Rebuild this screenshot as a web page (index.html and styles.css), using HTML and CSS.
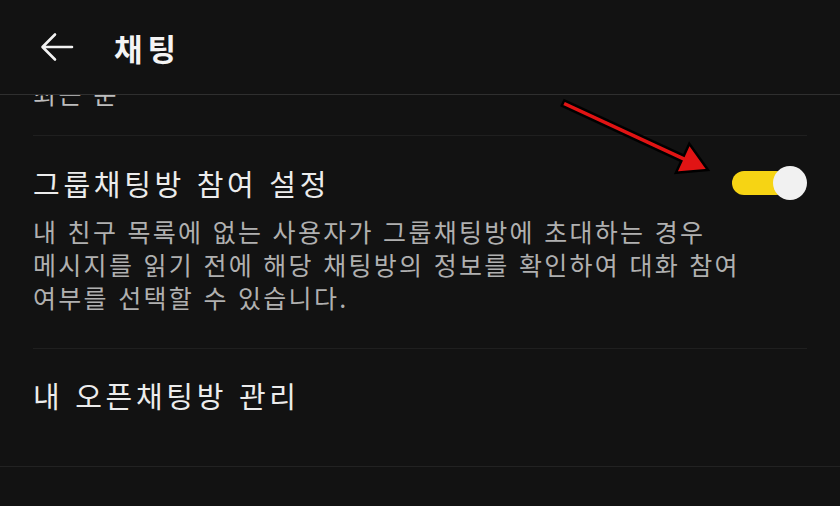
FILE: index.html
```html
<!DOCTYPE html>
<html lang="ko">
<head>
    <meta charset="UTF-8">
    <meta name="viewport" content="width=device-width, initial-scale=1.0">
    <title>채팅</title>
    <link rel="stylesheet" href="styles.css">
</head>
<body>
    <div class="screen">
        <header class="app-bar">
            <svg class="back-icon" width="34" height="30" viewBox="0 0 34 30">
                <path d="M32 15 H3 M15 2.5 L2.5 15 L15 27.5" fill="none" stroke="#f2f2f2" stroke-width="2.6" stroke-linecap="round" stroke-linejoin="round"/>
            </svg>
            <h1 class="app-title">채팅</h1>
        </header>

        <div class="list">
            <div class="row recent">
                <span class="recent-text">최근 순</span>
            </div>

            <div class="row setting">
                <div class="setting-head">
                    <span class="setting-title">그룹채팅방 참여 설정</span>
                    <div class="toggle on">
                        <div class="toggle-knob"></div>
                    </div>
                </div>
                <p class="setting-desc">내 친구 목록에 없는 사용자가 그룹채팅방에 초대하는 경우<br>메시지를 읽기 전에 해당 채팅방의 정보를 확인하여 대화 참여<br>여부를 선택할 수 있습니다.</p>
            </div>

            <div class="row setting single">
                <span class="setting-title">내 오픈채팅방 관리</span>
            </div>
        </div>

        <div class="bottom-rule"></div>

        <!-- red pointer over the toggle -->
        <svg class="pointer" width="840" height="506" viewBox="0 0 840 506">
            <polygon points="564.3,100.3 683.9,155.6 689.3,143.8 708,170 675.9,172.8 681.3,161 561.7,105.7"
                     fill="#e11414" stroke="#000" stroke-width="2.5" stroke-linejoin="miter"/>
        </svg>
    </div>
</body>
</html>
```

FILE: styles.css
```css
body {
    margin: 0;
    background-color: #121212;
    font-family: "Noto Sans CJK KR", "Noto Sans", sans-serif;
    color: #ececec;
}

.screen {
    position: relative;
    width: 840px;
    height: 506px;
    overflow: hidden;
}

.app-bar {
    height: 94px;
    border-bottom: 1px solid #2f2f2f;
    display: flex;
    align-items: center;
    padding-left: 40px;
    position: relative;
    z-index: 2;
    background-color: #121212;
}

.back-icon {
    display: block;
    margin-top: -1px;
}

.app-title {
    margin: 0 0 0 40px;
    font-size: 31px;
    font-weight: 700;
    color: #f4f4f4;
    letter-spacing: 5px;
}

.list {
    margin: 0 33px;
}

.row {
    border-bottom: 1px solid #1f1f1f;
}

.recent {
    display: flow-root;
    height: 40px;
}

.recent-text {
    display: block;
    margin-top: -18px;
    font-size: 25px;
    line-height: 32px;
    color: #bdbdbd;
    letter-spacing: 2.5px;
}

.setting {
    padding: 28px 0 34px;
}

.setting-head {
    display: flex;
    align-items: center;
    justify-content: space-between;
}

.setting-title {
    font-size: 29px;
    line-height: 38px;
    color: #ececec;
    letter-spacing: 3.7px;
}

.setting-desc {
    margin: 13px 0 0;
    font-size: 25px;
    line-height: 33px;
    color: #b0b0b0;
    letter-spacing: 2.3px;
}

.single {
    padding: 27px 0 52px;
    border-bottom: none;
}

.toggle {
    width: 75px;
    height: 34px;
    position: relative;
}

.toggle::before {
    content: "";
    position: absolute;
    left: 0;
    top: 5px;
    width: 56px;
    height: 24px;
    border-radius: 12px;
    background-color: #f6d414;
}

.toggle-knob {
    position: absolute;
    right: 0;
    top: 0;
    width: 34px;
    height: 34px;
    border-radius: 50%;
    background-color: #f1f1f1;
}

.bottom-rule {
    border-top: 1px solid #222;
}

.pointer {
    position: absolute;
    left: 0;
    top: 0;
    z-index: 3;
}
```
